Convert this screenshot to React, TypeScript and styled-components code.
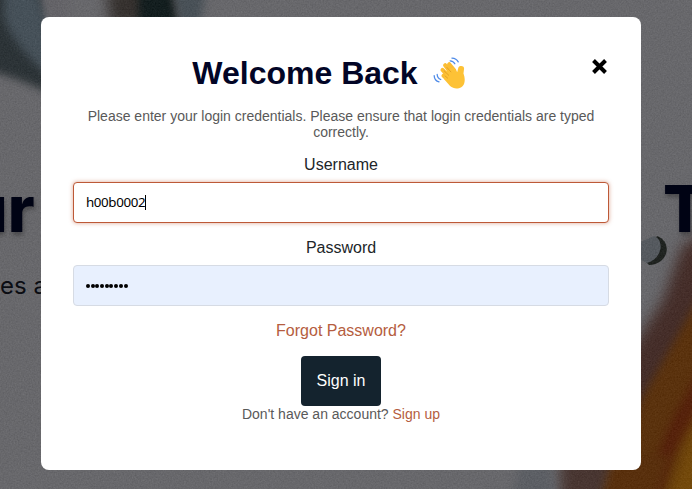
import React from "react";
import styled, { createGlobalStyle } from "styled-components";

const GlobalStyle = createGlobalStyle`
  *, *::before, *::after { box-sizing: border-box; }
  body { margin: 0; overflow: hidden; font-family: "Liberation Sans", Arial, sans-serif; }
`;

const Page = styled.main`
  position: relative;
  width: 692px;
  height: 489px;
  overflow: hidden;
  background: #66666a;
`;

const Photo = styled.svg`
  position: absolute;
  inset: 0;
  width: 100%;
  height: 100%;

  filter {
    color-interpolation-filters: sRGB;
  }
`;

const HeroText = styled.span<{ $x: number; $y: number; $large?: boolean }>`
  position: absolute;
  left: ${(p) => p.$x}px;
  top: ${(p) => p.$y}px;
  white-space: nowrap;
  line-height: 1;
  color: ${(p) => (p.$large ? "#000314" : "#0b0d13")};
  font-family: Inter, sans-serif;
  font-size: ${(p) => (p.$large ? 64 : 24)}px;
  font-weight: ${(p) => (p.$large ? 800 : 400)};
  text-shadow: ${(p) => (p.$large ? "1px 3px 4px rgba(0, 0, 0, 0.3)" : "none")};
`;

const Overlay = styled.div`
  position: relative;
  display: flex;
  justify-content: center;
  padding: 17px 10px 0 0;
  width: 692px;
`;

const Dialog = styled.section`
  position: relative;
  display: flex;
  flex-direction: column;
  align-items: center;
  width: 600px;
  height: 453px;
  padding: 37px 32px 0;
  border-radius: 8px;
  background: #fff;
`;

const CloseButton = styled.button`
  position: absolute;
  top: 41px;
  right: 33px;
  display: flex;
  padding: 0;
  border: 0;
  background: none;
`;

const Title = styled.h1`
  display: flex;
  align-items: center;
  gap: 15px;
  height: 39px;
  margin: 0 24px 0 0;
  color: #020526;
  font-size: 32px;
  font-weight: 700;
  line-height: 39px;
`;

const Intro = styled.p`
  margin: 15px 0 0;
  color: #595959;
  font-size: 14px;
  line-height: 16px;
  text-align: center;
`;

const Label = styled.label`
  margin-top: 16px;
  color: #212529;
  font-size: 16px;
  line-height: 18px;
`;

const Field = styled.div<{ $active?: boolean }>`
  display: flex;
  align-items: center;
  flex: none;
  width: 536px;
  height: 41px;
  margin-top: 8px;
  padding: 0 12px;
  border: 1px solid ${(p) => (p.$active ? "#bd5937" : "#d6dbe4")};
  border-radius: 4px;
  background: ${(p) => (p.$active ? "#fff" : "#e8f0fe")};
  box-shadow: ${(p) => (p.$active ? "0 0 4px rgba(189, 89, 55, 0.55)" : "none")};
  color: #000;
  font-family: "Noto Sans", sans-serif;
  font-size: 13.33px;
  letter-spacing: -0.38px;
  line-height: 19px;
`;

const Caret = styled.span`
  width: 1px;
  height: 15px;
  background: #000;
`;

const Dots = styled.span`
  display: flex;
  gap: 0.7px;
  height: 4px;
`;

const Dot = styled.i`
  width: 4px;
  height: 4px;
  border-radius: 50%;
  background: #000;
`;

const Link = styled.a`
  color: #b55d40;
`;

const Forgot = styled(Link)`
  margin-top: 16px;
  font-size: 16px;
  line-height: 18px;
`;

const SignIn = styled.button`
  flex: none;
  width: 80px;
  height: 50px;
  margin-top: 16px;
  padding: 0;
  border: 0;
  border-radius: 4px;
  background: #14232e;
  color: #fff;
  font: 16px "Liberation Sans", Arial, sans-serif;
`;

const SignUpLine = styled.p`
  margin: 0;
  color: #595959;
  font-size: 14px;
  line-height: 16px;
`;

function Wave() {
  return (
    <svg width="33" height="33" viewBox="0 0 34 34" fill="none">
      <g stroke="#4f8be8" strokeWidth="1.3" strokeLinecap="round">
        <path d="M17.7 4Q21 4.2 22.5 7M19.5 1.2Q24.2 1.5 26 5" />
        <path d="M4.3 18Q4.5 21.8 8 23.2M1.2 19.2Q1.5 24.5 6.2 25.7" />
      </g>
      <g stroke="#fbbd33" strokeWidth="4.2" strokeLinecap="round">
        <path d="M19 17L12.5 8.5M22 14L16.7 7.5M17 21L9.8 13.3M17 24.5L10.8 19.3" />
      </g>
      <path d="M14 14L21 10.5L25 15.5Q25.5 13 26.2 10.8C27.3 8.7 32.3 8.6 32 12.2L31.4 17C32.5 20 33.2 23.5 32.2 27C30.5 33 22.3 34.2 17.6 30L11 22.5Z" fill="#fdc236" />
      <path d="M14.4 10.8L18.4 15.3M11.5 14.3L16.2 18.8M12.5 19.6L15 21.7" stroke="#dc9821" strokeWidth=".8" strokeLinecap="round" />
    </svg>
  );
}

function Backdrop() {
  return (
    <Photo viewBox="0 0 692 489" aria-hidden="true">
      <defs>
        <filter id="soft" x="-40%" y="-40%" width="180%" height="180%"><feGaussianBlur stdDeviation="7" /></filter>
        <filter id="slight" x="-40%" y="-40%" width="180%" height="180%"><feGaussianBlur stdDeviation="4" /></filter>
        <filter id="grain" x="0" y="0" width="100%" height="100%">
          <feTurbulence type="fractalNoise" baseFrequency="0.65" numOctaves="2" seed="4" />
          <feColorMatrix type="matrix" values=".6 .6 0 0 -.2  .6 .6 0 0 -.2  .6 .6 0 0 -.2  0 0 0 0 .11" />
        </filter>
      </defs>
      <rect width="692" height="489" fill="#68686c" />
      <path d="M-20-20H42V60L60 98Q20 78-20 68Z" fill="#252d31" filter="url(#slight)" />
      <path d="M4-25H32L44 12L56 80Q16 52 4 18Z" fill="#424e57" filter="url(#slight)" />
      <path d="M40-15H66V25H50Z" fill="#646368" filter="url(#slight)" />
      <path d="M106-20H180V25H110Z" fill="#302b28" filter="url(#soft)" />
      <path d="M138-20H170L179 30H139Z" fill="#091516" filter="url(#slight)" />
      <path d="M172-10H206L200 25H180Z" fill="#454e55" filter="url(#slight)" />
      <path d="M720 224L682 246L663 300L625 360V510H720Z" fill="#412722" filter="url(#soft)" />
      <path d="M720 260L640 402L602 530H720Z" fill="#592c03" filter="url(#slight)" />
      <path d="M710 350L672 420L635 510H655L675 455L710 395Z" fill="#531900" filter="url(#slight)" />
      <path d="M715 385L685 441L660 515H715Z" fill="#754600" filter="url(#soft)" />
      <path d="M560 450H622L604 515H560Z" fill="#45302b" filter="url(#soft)" />
      <path d="M520 464H550L556 505H510Z" fill="#5b5e64" filter="url(#slight)" />
      <path d="M613 455H670L655 510H597Z" fill="#572902" filter="url(#slight)" />
      <path d="M657 236C672 241 670 264 649 265L644 260Z" fill="#171b18" />
      <path d="M654 236C665 240 662 259 647 263L636 257V244Z" fill="#53585e" />
      <rect width="692" height="489" filter="url(#grain)" />
    </Photo>
  );
}

export default function App() {
  return (
    <>
      <GlobalStyle />
      <Page>
        <Backdrop />
        <HeroText $large $x={-33} $y={177}>ur</HeroText>
        <HeroText $large $x={663} $y={177}>T</HeroText>
        <HeroText $x={0} $y={274}>es a</HeroText>
        <Overlay>
          <Dialog role="dialog" aria-label="Welcome Back">
            <CloseButton aria-label="Close">
              <svg width="17" height="17" viewBox="0 0 17 17">
                <path d="M2.5 2.5L14.5 14.5M14.5 2.5L2.5 14.5" stroke="#000" strokeWidth="4" />
              </svg>
            </CloseButton>
            <Title>Welcome Back <Wave /></Title>
            <Intro>Please enter your login credentials. Please ensure that login credentials are typed correctly.</Intro>
            <Label>Username</Label>
            <Field $active>h00b0002<Caret /></Field>
            <Label>Password</Label>
            <Field>
              <Dots>{Array.from({ length: 9 }, (_, i) => <Dot key={i} />)}</Dots>
            </Field>
            <Forgot>Forgot Password?</Forgot>
            <SignIn>Sign in</SignIn>
            <SignUpLine>Don't have an account? <Link>Sign up</Link></SignUpLine>
          </Dialog>
        </Overlay>
      </Page>
    </>
  );
}
